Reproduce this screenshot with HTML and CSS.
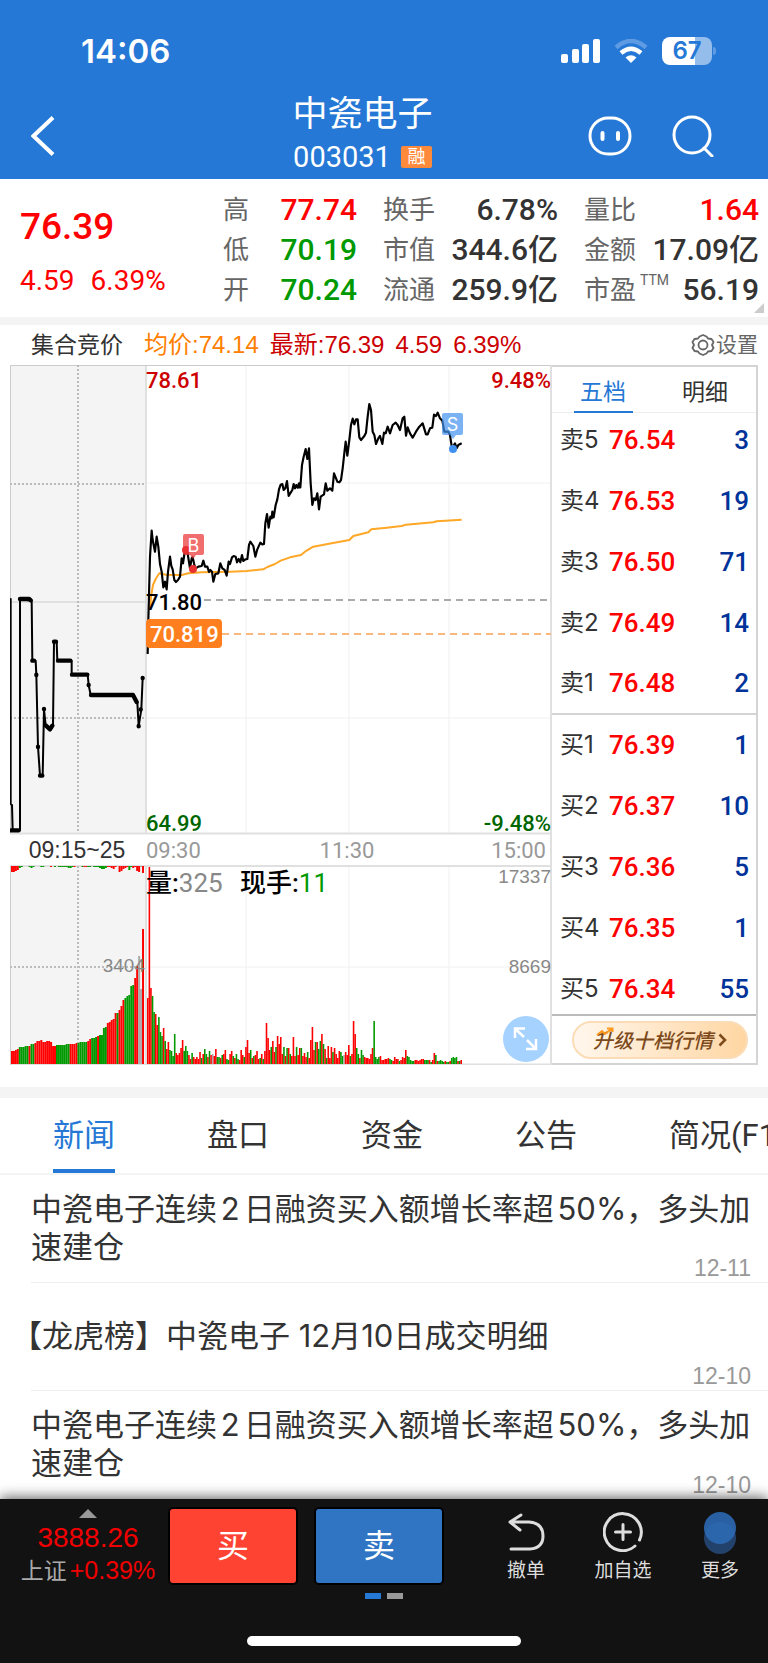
FILE: index.html
```html
<!DOCTYPE html>
<html lang="zh-CN">

<head>
    <meta charset="utf-8">
    <meta name="viewport" content="width=device-width, initial-scale=1">
    <title>中瓷电子 003031</title>
    <link rel="stylesheet" href="styles.css">
</head>

<body>
    <header class="top">
        <div class="status">
            <span class="clock">14:06</span>
            <svg class="signal" viewBox="0 0 39 24" width="39" height="24" fill="#fff">
                <rect x="0" y="15" width="7" height="9" rx="2" />
                <rect x="11" y="10" width="7" height="14" rx="2" />
                <rect x="21" y="5" width="7" height="19" rx="2" />
                <rect x="32" y="0" width="7" height="24" rx="2" />
            </svg>
            <svg class="wifi" viewBox="0 0 34 24" width="34" height="24" fill="none" stroke-width="4.5">
                <path d="M2 8.500Q17-4.500 32 8.500" stroke="#5e9be3" />
                <path d="M7 14Q17 5.500 27 14" stroke="#fff" />
                <path d="M11.500 18.500Q17 14 22.500 18.500L17 24z" fill="#fff" />
            </svg>
            <span class="battery">67</span>
        </div>
        <div class="navbar">
            <button class="icon-btn back" aria-label="返回">
                <svg viewBox="0 0 24 40" width="24" height="40" fill="none" stroke="#fff" stroke-width="4">
                    <path d="M22 1.500L2.500 20L22 38.500" />
                </svg>
            </button>
            <div class="title">
                <h1>中瓷电子</h1>
                <p>003031 <span class="tag">融</span></p>
            </div>
            <button class="icon-btn" aria-label="助手">
                <svg viewBox="0 0 44 40" width="44" height="40" fill="none" stroke="#fff" stroke-width="3">
                    <rect x="2" y="2" width="40" height="36" rx="18" />
                    <path d="M14.500 17v6M30 17v6" stroke-width="4" stroke-linecap="round" />
                </svg>
            </button>
            <button class="icon-btn" aria-label="搜索">
                <svg viewBox="0 0 42 42" width="42" height="42" fill="none" stroke="#fff" stroke-width="3">
                    <circle cx="20" cy="20" r="18" />
                    <path d="M32 33l8 8" stroke-linecap="round" />
                </svg>
            </button>
        </div>
    </header>

    <main>
        <section class="quote">
            <div class="last">
                <strong>76.39</strong>
                <p><span>4.59</span><span>6.39%</span></p>
            </div>
            <dl class="stats high">
                <div><dt>高</dt><dd class="up">77.74</dd></div>
                <div><dt>低</dt><dd class="down">70.19</dd></div>
                <div><dt>开</dt><dd class="down">70.24</dd></div>
            </dl>
            <dl class="stats">
                <div><dt>换手</dt><dd>6.78%</dd></div>
                <div><dt>市值</dt><dd>344.6亿</dd></div>
                <div><dt>流通</dt><dd>259.9亿</dd></div>
            </dl>
            <dl class="stats">
                <div><dt>量比</dt><dd class="up">1.64</dd></div>
                <div><dt>金额</dt><dd>17.09亿</dd></div>
                <div><dt>市盈<sup>TTM</sup></dt><dd>56.19</dd></div>
            </dl>
        </section>

        <section class="chart-panel">
            <div class="legend">
                <span class="auction">集合竞价</span>
                <span class="avg">均价:74.14</span>
                <span class="now">最新:76.39</span>
                <span class="now">4.59</span>
                <span class="now">6.39%</span>
                <button class="settings">
                    <svg viewBox="0 0 24 24" width="24" height="24" fill="none" stroke="#666" stroke-width="1.800" stroke-linejoin="round">
                        <path d="M8.500 3.500L12 2l3.500 1.500L17 5.500L20.500 6L22.500 9L21 12L22.500 15L20.500 18L17 18.500L15.500 20.500L12 22L8.500 20.500L7 18.500L3.500 18L1.500 15L3 12L1.500 9L3.500 6L7 5.500z" />
                        <circle cx="12" cy="12" r="4.500" />
                    </svg>设置</button>
            </div>

            <div class="trade">
                <div class="chart">
                    <svg viewBox="0 0 542 700">
                        <!-- auction background and grid -->
                        <rect x="0" y="0" width="136" height="468" fill="#f4f4f4" />
                        <rect x="0" y="501" width="136" height="198" fill="#f4f4f4" />
                        <g class="grid">
                            <path d="M136 118H541M136 353H541M136 602H541M236 0V468M339 0V468M439 0V468M236 501V699M339 501V699M439 501V699" />
                        </g>
                        <path class="frame" d="M0 468.500H541M0 501H541M136 0V468M136 501V699M541 0V700M0 699.500H541" />
                        <path class="axis" d="M0 .500H541M.500 0V468M.500 501V700M0 237H136" />
                        <path class="dotted" d="M0 119H136M0 353H136M0 602H136M68 0V468M68 501V699" />
                        <path class="dash" d="M194 235H541" stroke="#aaa" />
                        <path class="dash" d="M212 269H541" stroke="#f9b77c" />

                        <g transform="translate(-10 215) scale(.33333)" fill="none" stroke="#000" stroke-linejoin="round" stroke-linecap="round">
                            <path stroke-width="6" d="M32 57V672L36 675L38 750H60V57L95 62L97 242H107L109 284L114 500L120 587H128L132 388L137 435L150 448L159 435L162 185H170L172 242H215V284H263L266 315L272 345H400L412 368L416 438L424 388L428 294" />
                            <path stroke-width="13" d="M60 57H88L92 61M34 751H56M97 242H102M109 284V285M114 500V501M120 587H127M132 387V388M138 437L150 448L157 437M162 185H168M174 242H211M216 284H262M266 315V316M273 345H399L410 366M416 438V439M422 388V389M428 294V295" />
                        </g>

                        <g transform="translate(120 15) scale(.33333)" fill="none" stroke-linejoin="round">
                            <polyline stroke="#ffa726" stroke-width="6" points="60,690 63,650 69,615 77,597 88,580 108,584 155,585 175,580 215,577 300,575 350,573 400,568 412,561 435,552 452,542 480,532 513,525 525,515 550,500 605,490 658,480 670,468 715,457 724,448 770,443 815,438 828,434 910,427 920,424 995,419" />
                            <polyline stroke="#000" stroke-width="6.500" points="53,822 55,720 60,530 65,452 68,480 75,515 80,470 85,500 90,552 95,575 100,622 105,605 110,628 114,575 120,530 124,558 128,568 133,600 138,606 144,600 150,590 155,535 159,550 165,510 172,515 180,565 185,535 188,532 192,550 196,566 205,560 215,558 220,542 225,560 232,560 237,576 241,570 246,575 250,605 256,582 265,580 271,550 277,565 284,570 290,587 296,545 300,552 306,532 311,528 317,530 321,547 326,537 331,547 336,525 340,543 346,538 352,537 357,495 361,485 370,498 376,530 382,508 391,488 397,493 402,492 406,430 411,402 416,443 421,410 425,415 427,395 431,412 437,375 442,358 447,328 452,314 457,312 461,330 466,325 471,303 476,348 482,338 487,330 491,312 495,325 499,315 503,323 507,310 507,322 511,322 516,255 521,230 527,207 532,237 537,205 542,310 547,375 552,355 557,360 562,340 567,388 572,350 582,343 587,310 592,332 600,325 607,332 612,280 622,305 628,307 633,300 638,265 644,210 647,185 652,227 658,180 663,135 668,116 673,133 678,118 683,118 688,172 693,180 703,168 708,158 713,110 718,72 723,90 728,155 733,165 738,192 745,175 750,168 757,192 762,158 767,160 773,140 780,160 788,135 797,128 803,135 810,150 818,115 823,110 828,167 833,142 840,160 848,173 858,155 868,140 878,130 888,163 893,163 900,145 907,143 912,104 918,108 923,98 930,115 937,122 943,155 955,155 960,165 966,205 975,190 980,205 985,195 995,190" />
                        </g>

                        <!-- buy / sell marks -->
                        <g fill="#e93030">
                            <circle cx="176" cy="185" r="4" />
                            <circle cx="183" cy="204" r="4" />
                            <path d="M175 169h17q2 0 2 2v17q0 2-2 2h-6l-3 4l-3-4h-5q-2 0-2-2v-17q0-2 2-2z" opacity=".7" />
                        </g>
                        <g fill="#4191f0">
                            <circle cx="443" cy="84" r="4" />
                            <path d="M434 48h17q2 0 2 2v18q0 2-2 2h-5l-3 4l-3-4h-6q-2 0-2-2v-18q0-2 2-2z" opacity=".7" />
                        </g>
                        <g class="mark">
                            <text x="183.500" y="187">B</text>
                            <text x="442.500" y="66">S</text>
                        </g>

                        <g id="volume"></g>

                        <g class="num">
                            <text x="136" y="23" fill="#c00">78.61</text>
                            <text x="541" y="23" fill="#c00" text-anchor="end">9.48%</text>
                            <text x="136" y="245">71.80</text>
                            <text x="136" y="466" fill="#060">64.99</text>
                            <text x="541" y="466" fill="#060" text-anchor="end">-9.48%</text>
                            <rect x="136" y="254" width="76" height="29" rx="4" fill="#ff7f1e" />
                            <text x="140" y="277" fill="#fff">70.819</text>
                        </g>
                        <g class="time">
                            <text x="136" y="493">09:30</text>
                            <text x="337" y="493" text-anchor="middle">11:30</text>
                            <text x="536" y="493" text-anchor="end">15:00</text>
                        </g>
                        <text class="auction-time" x="67" y="493" text-anchor="middle">09:15~25</text>
                        <text class="vol" x="136" y="527"><tspan class="b">量:</tspan><tspan fill="#888">325</tspan></text>
                        <text class="vol" x="230" y="527"><tspan class="b">现手:</tspan><tspan fill="#090">11</tspan></text>
                        <g class="scale">
                            <text x="541" y="518">17337</text>
                            <text x="541" y="608">8669</text>
                            <text x="135" y="607">3404</text>
                        </g>
                    </svg>
                    <button class="expand" aria-label="放大">
                        <svg viewBox="0 0 46 46" width="46" height="46" fill="none" stroke="#fff" stroke-width="2.500">
                            <path d="M12 22V12.500H22M13 13.500L21 21M33 23V33H23M32 32L24 24" />
                        </svg>
                    </button>
                </div>

                <div class="book">
                    <div class="book-tabs">
                        <button class="active">五档</button>
                        <button>明细</button>
                    </div>
                    <table>
                        <tbody>
                            <tr><th>卖5</th><td>76.54</td><td>3</td></tr>
                            <tr><th>卖4</th><td>76.53</td><td>19</td></tr>
                            <tr><th>卖3</th><td>76.50</td><td>71</td></tr>
                            <tr><th>卖2</th><td>76.49</td><td>14</td></tr>
                            <tr><th>卖1</th><td>76.48</td><td>2</td></tr>
                        </tbody>
                        <tbody>
                            <tr><th>买1</th><td>76.39</td><td>1</td></tr>
                            <tr><th>买2</th><td>76.37</td><td>10</td></tr>
                            <tr><th>买3</th><td>76.36</td><td>5</td></tr>
                            <tr><th>买4</th><td>76.35</td><td>1</td></tr>
                            <tr><th>买5</th><td>76.34</td><td>55</td></tr>
                        </tbody>
                    </table>
                    <div class="upgrade">
                        <button>
                            <svg class="spark" viewBox="0 0 18 10" width="18" height="10" fill="none" stroke="#ff9a1f" stroke-width="2">
                                <path d="M1 8L6 4L9 7L16 1.500M11 1.500H16.500V5" />
                            </svg>
                            <em>升级十档行情</em>
                            <svg viewBox="0 0 9 14" width="9" height="14" fill="none" stroke="#7d4a1c" stroke-width="2.500">
                                <path d="M1.500 1.500L7 7L1.500 12.500" />
                            </svg>
                        </button>
                    </div>
                </div>
            </div>
        </section>

        <nav class="tabs">
            <a href="#news" class="active">新闻</a>
            <a href="#board">盘口</a>
            <a href="#fund">资金</a>
            <a href="#notice">公告</a>
            <a href="#f10">简况(F10)</a>
        </nav>

        <ul class="news" id="news">
            <li><a href="#">中瓷电子连续2日融资买入额增长率超50%，多头加速建仓</a><time>12-11</time></li>
            <li><a href="#" class="bracket">【龙虎榜】中瓷电子 12月10日成交明细</a><time>12-10</time></li>
            <li><a href="#">中瓷电子连续2日融资买入额增长率超50%，多头加速建仓</a><time>12-10</time></li>
        </ul>
    </main>

    <footer class="bottom">
        <div class="actions">
            <a href="#" class="index">
                <i class="arrow"></i>
                <span class="point">3888.26</span>
                <span class="change">上证<b>+0.39%</b></span>
            </a>
            <button class="deal buy">买</button>
            <button class="deal sell">卖</button>
            <div class="tools">
                <button>
                    <svg viewBox="0 0 40 40" width="40" height="40" fill="none" stroke="#ddd" stroke-width="3" stroke-linecap="round" stroke-linejoin="round">
                        <path d="M15 3L4 10L14 18M4 10H23Q37 11 37 24Q37 36 24 37H5" />
                    </svg>撤单</button>
                <button>
                    <svg viewBox="0 0 40 40" width="40" height="40" fill="none" stroke="#ddd" stroke-width="3" stroke-linecap="round">
                        <path d="M32 34A18.500 18.500 0 1 1 36.500 28M20 12.500V27.500M12.500 20H27.500" />
                    </svg>加自选</button>
                <button>
                    <svg viewBox="0 0 40 44" width="40" height="44">
                        <circle cx="20" cy="26" r="16" fill="#22426b" />
                        <circle cx="20" cy="16" r="16" fill="#2c69b4" opacity=".9" />
                    </svg>更多</button>
            </div>
        </div>
        <div class="pager"><i class="on"></i><i></i></div>
        <div class="home"></div>
    </footer>
    <script src="chart.js"></script>
</body>

</html>
```
FILE: styles.css
```css
* {
    box-sizing: border-box;
}

body {
    margin: 0;
    min-height: 100vh;
    display: flex;
    flex-direction: column;
    background: #fff;
    color: #333;
    font-family: Roboto, "Noto Sans CJK SC", sans-serif;
    overflow-x: hidden;
}

button {
    margin: 0;
    padding: 0;
    border: 0;
    background: none;
    color: inherit;
    font: inherit;
    cursor: pointer;
}

a {
    color: inherit;
    text-decoration: none;
}

svg {
    display: block;
}

h1, p, dl, dd, ul {
    margin: 0;
    padding: 0;
}

/* header */
.top {
    background: #2578d5;
    color: #fff;
    height: 179px;
}

.status {
    display: flex;
    align-items: center;
    height: 102px;
    padding: 0 56px 0 81px;
}

.clock {
    flex: 1;
    font: 600 33px/36px Inter, sans-serif;
}

.wifi {
    margin: 0 14px 0 14px;
}

.battery {
    position: relative;
    width: 50px;
    height: 28px;
    border-radius: 8px;
    background: linear-gradient(90deg, #fff 66%, #94bdec 66%);
    color: #2578d5;
    font: 600 24px/28px Inter, sans-serif;
    text-align: center;
}

.battery::after {
    content: "";
    position: absolute;
    left: 51px;
    top: 10px;
    width: 3px;
    height: 8px;
    border-radius: 0 3px 3px 0;
    background: #5e9be3;
}

.navbar {
    display: flex;
    align-items: center;
    gap: 40px;
    padding: 0 54px 0 31px;
    height: 68px;
}

.title {
    flex: 1;
    padding-left: 82px;
    text-align: center;
}

.title h1 {
    font-size: 35px;
    font-weight: 400;
    line-height: 42px;
}

.title p {
    display: flex;
    align-items: center;
    justify-content: center;
    gap: 10px;
    font-size: 29px;
    line-height: 42px;
}

.tag {
    width: 31px;
    height: 22px;
    border-radius: 2px;
    background: #ff8a3c;
    font-size: 18px;
    line-height: 21px;
}

/* quote */
.quote {
    position: relative;
    display: flex;
    justify-content: space-between;
    padding: 11px 9px 7px 20px;
    border-bottom: 8px solid #f4f4f4;
    height: 146px;
}

.quote::after {
    content: "";
    position: absolute;
    right: 4px;
    bottom: 4px;
    border: 5px solid;
    border-color: transparent #ccc #ccc transparent;
}

.last {
    width: 177px;
    padding-top: 14px;
    color: #f00;
}

.last strong {
    display: block;
    font-size: 37px;
    font-weight: 500;
    line-height: 46px;
}

.last p {
    display: flex;
    gap: 16px;
    margin-top: 14px;
    font-size: 28px;
    line-height: 34px;
}

.stats {
    width: 175px;
}

.stats.high {
    width: 134px;
}

.stats div {
    display: flex;
    justify-content: space-between;
    height: 40px;
    line-height: 40px;
}

.stats dt {
    color: #666;
    font-size: 26px;
    white-space: nowrap;
}

.stats dd {
    font-size: 30px;
    font-weight: 500;
    white-space: nowrap;
}

sup {
    margin-left: 4px;
    font-size: 14px;
    line-height: 0;
    vertical-align: 14px;
}

.stats .up {
    color: #f00;
}

.stats .down {
    color: #090;
}

/* chart */
.chart-panel {
    padding: 0 10px 22px 10px;
    border-bottom: 11px solid #f4f4f4;
}

.legend {
    display: flex;
    align-items: center;
    gap: 11px;
    height: 40px;
    padding-left: 21px;
    font: 24px/40px "Liberation Sans", "Noto Sans CJK SC", sans-serif;
    white-space: nowrap;
}

.auction {
    margin-right: 10px;
    font-size: 23px;
}

.avg {
    color: #ff8000;
}

.now {
    color: #c00;
}

.settings {
    display: flex;
    align-items: center;
    gap: 1px;
    margin-left: auto;
    color: #666;
    font-size: 21px;
}

.trade {
    display: flex;
}

.chart {
    position: relative;
    flex: 1;
}

.chart > svg {
    width: 100%;
}

.grid {
    fill: none;
    stroke: #f0f0f0;
    stroke-width: 1;
}

.frame {
    fill: none;
    stroke: #e0e0e0;
    stroke-width: 2;
}

.axis {
    fill: none;
    stroke: #ccc;
}

.dotted {
    fill: none;
    stroke: #bbb;
    stroke-width: 2;
    stroke-dasharray: 2 2;
}

.dash {
    fill: none;
    stroke-width: 2;
    stroke-dasharray: 7 5;
}

.mark {
    fill: #fff;
    font: 18px Inter, sans-serif;
    text-anchor: middle;
}

.num {
    font-size: 22px;
    font-weight: 500;
}

.time {
    fill: #999;
    font-size: 22px;
}

.auction-time {
    fill: #333;
    font: 23px "Liberation Sans", sans-serif;
}

.vol {
    font-size: 26px;
}

.vol .b {
    font-weight: 500;
}

.scale {
    fill: #888;
    font: 19px "Liberation Sans", sans-serif;
    text-anchor: end;
}

.expand {
    position: absolute;
    right: 3px;
    bottom: 3px;
    width: 46px;
    height: 46px;
    border-radius: 50%;
    background: #a6d2ff;
}

/* order book */
.book {
    display: flex;
    flex-direction: column;
    width: 206px;
    border: solid #d4d4d4;
    border-width: 2px 2px 2px 0;
}

.book-tabs {
    display: flex;
    height: 46px;
    margin-bottom: -4px;
    border-bottom: 1px solid #eee;
    font-size: 23px;
}

.book-tabs button {
    flex: 1;
}

.book-tabs .active {
    position: relative;
    color: #2578d5;
}

.book-tabs .active::after {
    content: "";
    position: absolute;
    left: 22px;
    right: 21px;
    bottom: -1px;
    height: 2px;
    background: #2578d5;
}

.book table {
    width: 100%;
    border-collapse: collapse;
    table-layout: fixed;
}

.book tbody + tbody {
    border-top: 2px solid #d4d4d4;
}

.book tr {
    height: 61px;
}

.book th {
    width: 57px;
    padding: 0 0 0 8px;
    font: 24px/30px Inter, "Noto Sans CJK SC", sans-serif;
    text-align: left;
}

.book td {
    padding: 0;
    color: #f00;
    font-size: 26px;
    font-weight: 500;
}

.book td:last-child {
    padding-right: 7px;
    color: #039;
    text-align: right;
}

.upgrade {
    flex: 1;
    display: flex;
    align-items: center;
    margin-top: -5px;
    padding: 0 8px 0 20px;
    border-top: 2px solid #bbb;
}

.upgrade button {
    position: relative;
    display: flex;
    flex: 1;
    align-items: center;
    justify-content: center;
    gap: 5px;
    height: 38px;
    border: 2px solid #fbdcb6;
    border-radius: 19px;
    background: linear-gradient(90deg, #fff7ed, #ffd6a3);
    color: #7d4a1c;
    font-size: 20px;
    font-weight: 500;
}

.spark {
    position: absolute;
    left: 22px;
    top: 4px;
}

/* tabs + news */
.tabs {
    display: flex;
    gap: 92px;
    height: 77px;
    padding-left: 53px;
    border-bottom: 2px solid #f4f4f4;
    overflow: hidden;
    font-size: 31px;
    line-height: 75px;
    white-space: nowrap;
}

.tabs .active {
    color: #2578d5;
    box-shadow: inset 0 -4px #2578d5;
}

.news {
    padding-left: 31px;
    list-style: none;
}

.news li {
    position: relative;
    display: flex;
    align-items: center;
    height: 108px;
    padding: 0 12px 2px 0;
    border-bottom: 1px solid #eee;
    font: 31px/38px Inter, "Noto Sans CJK SC", sans-serif;
    text-autospace: normal;
}

.news li:last-child {
    border-bottom: 0;
}

.news .bracket {
    margin-left: -20px;
    text-autospace: no-autospace;
}

.news time {
    position: absolute;
    right: 17px;
    bottom: 2px;
    color: #999;
    font: 23px/24px "Liberation Sans", sans-serif;
}

/* bottom bar */
.bottom {
    position: relative;
    flex: 1;
    min-height: 164px;
    background: #121212;
    box-shadow: 0 -2px 12px rgba(0, 0, 0, .6);
    color: #ddd;
}

.actions {
    display: flex;
    align-items: flex-start;
    gap: 18px;
    padding: 8px 22px 0 8px;
}

.index {
    display: flex;
    flex-direction: column;
    align-items: center;
    width: 160px;
    margin-right: -18px;
    color: #aaa;
    font: 25px/33px "Liberation Sans", "Noto Sans CJK SC", sans-serif;
    white-space: nowrap;
}

.arrow {
    margin: 2px 0 3px;
    border: solid transparent;
    border-width: 0 9px 9px;
    border-bottom-color: #999;
}

.point {
    color: #f00000;
    font-size: 28px;
}

.change {
    font-size: 23px;
}

.change b {
    margin-left: 3px;
    color: #f00000;
    font-size: 25px;
    font-weight: 400;
}

.deal {
    width: 130px;
    height: 78px;
    border: 2px solid #000;
    border-radius: 5px;
    color: #fff;
    font-size: 32px;
    line-height: 70px;
}

.buy {
    background: #ff4332;
}

.sell {
    margin-left: -2px;
    background: #3075c4;
}

.tools {
    flex: 1;
    display: flex;
    justify-content: space-between;
    padding: 5px 0 0 38px;
}

.tools button {
    display: flex;
    flex-direction: column;
    align-items: center;
    gap: 7px;
    min-width: 52px;
    font-size: 19px;
    line-height: 24px;
}

.tools button:last-child {
    gap: 3px;
}

.pager {
    display: flex;
    justify-content: center;
    gap: 6px;
    height: 6px;
    margin-top: 5px;
}

.pager i {
    width: 16px;
    background: #999;
}

.pager .on {
    background: #2578d5;
}

.home {
    width: 274px;
    height: 10px;
    margin: 37px auto 0;
    border-radius: 5px;
    background: #fff;
}
```
FILE: chart.js
```javascript
(function() {
    const colors = { R: '#f00', G: '#090', X: '#aaa' };

    // call auction, one entry per bar: colour + height
    const auction = 'R13 R13 R14 R15 G17 G17 G17 G18 G18 R18 G20 G20 R21 R23 R23 R24 R22 R22 R23 R23 R22 R18 R18 ' +
        'G19 G19 G19 G19 G19 G20 G20 R20 R20 R20 R21 G21 G22 G22 G22 G22 R23 R25 G26 G26 G27 R28 G29 G29 G36 G37 ' +
        'R41 R42 R44 R45 R51 G51 R54 R58 R64 G66 G68 G69 G78 G79 R86 R98 X108 X75 R135';

    // unmatched auction volume, hangs from the top
    const rest = 'R6 R6 R5 R4 G2 G1 G0 R0 R0 G1 G2 G1 R0 R0 R0 G1 G1 R0 R0 R0 R1 R0 G1 G0 G1 G1 G1 G1 G1 G2 G2 G1 ' +
        'R1 R0 R0 R0 G1 R1 R1 G1 G1 R0 G1 G1 G1 G2 G3 G3 G2 R1 R1 R2 R3 R1 R0 R6 R5 R3 R2 R1 G4 G1 R2 R1 R5 R6 X1 R7';

    const minutes = 'R66 R197 R76 G68 G52 R50 R39 G47 G32 G28 R36 G23 R15 R22 G14 G13 G8 G30 R11 R9 R11 R16 R24 G13 ' +
        'G18 G13 R9 R5 G11 R7 R5 R7 R5 R12 G6 R10 G15 G10 R7 G13 R9 X10 R8 R15 G7 G7 R6 G9 R10 R14 G5 G4 R10 R13 ' +
        'G8 R6 G10 G5 R4 R14 R9 G7 R17 R24 R11 G14 R6 G8 R9 R13 R5 G6 R10 G5 R13 R41 R26 R14 G17 R23 R12 G17 R28 ' +
        'R20 R27 R10 G17 R8 G16 R16 G10 R8 R27 R8 G17 R9 R16 G16 R8 R11 R7 G12 R6 R24 R37 ' +
        'R14 G22 R22 G15 G23 R30 G20 R15 G6 R18 R6 R17 G12 R16 R10 R6 R13 G12 G8 X9 R12 R9 R19 G8 R10 R43 ' +
        'R30 G16 G10 R6 G14 G9 R7 R6 R6 R5 R10 R16 G43 G7 G5 G7 R8 R4 R4 R5 R5 R6 G5 G4 R3 R7 R5 R5 G3 R4 R7 R6 ' +
        'R14 G8 G7 G4 G3 G3 R4 R4 R3 R4 R5 R5 G4 G4 G4 R4 G2 R4 R11 G9 R3 G3 G4 G3 G2 R3 G2 G2 R3 G6 G7 G6 G7 R3 G3 R4';

    function bars(data, x0, x1, base, dir) {
        const list = data.split(' ');
        const step = (x1 - x0) / list.length;
        let out = '';
        list.forEach(function(item, i) {
            const h = +item.slice(1);
            const y = dir > 0 ? base : base - h;
            out += `<rect x="${x0 + i * step}" y="${y}" width="${step}" height="${h}" fill="${colors[item[0]]}"/>`;
        });
        return out;
    }

    document.querySelector('#volume').innerHTML =
        bars(auction, 1, 134, 699, -1) +
        bars(rest, 1, 134, 501, 1) +
        bars(minutes, 137, 452, 699, -1);
})();
```
